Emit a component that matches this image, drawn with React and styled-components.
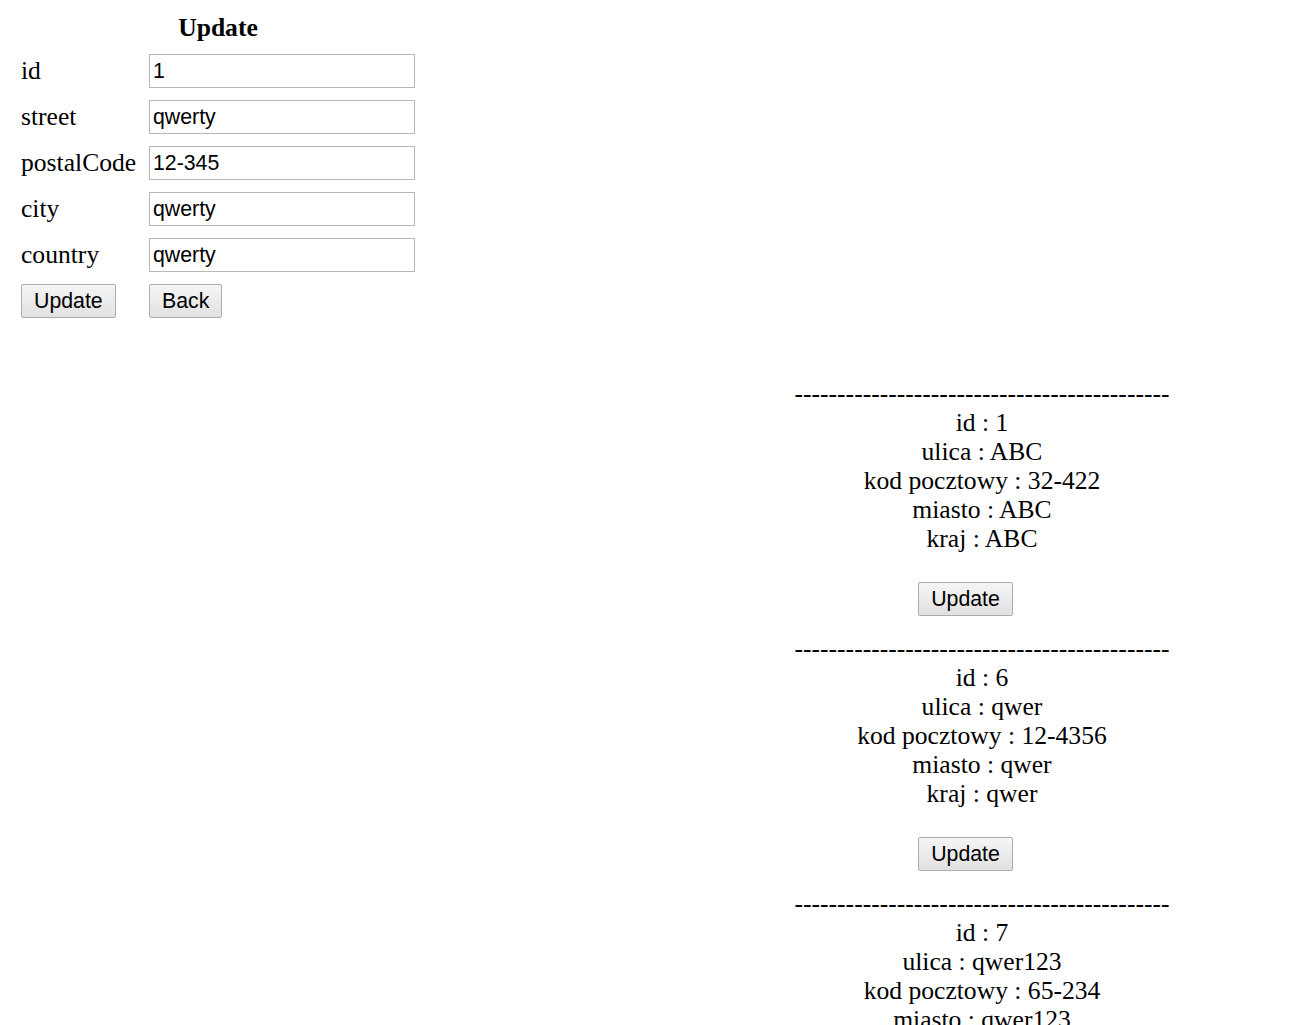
import React from "react";
import styled, { createGlobalStyle } from "styled-components";

const Global = createGlobalStyle`
  html, body {
    margin: 0;
    padding: 0;
    background: #ffffff;
    overflow: hidden;
  }
  body {
    font-family: "Liberation Serif", "Times New Roman", serif;
    color: #000;
  }
`;

const Page = styled.div`
  display: grid;
  grid-template-columns: 1fr 400px;
  grid-template-rows: auto auto;
  padding: 13px 118px 0 21px;
  height: 1025px;
  box-sizing: border-box;
  align-content: start;
`;

const Form = styled.form`
  grid-column: 1;
  grid-row: 1;
  display: grid;
  grid-template-columns: 128px 266px;
  grid-template-rows: 29px;
  grid-auto-rows: 34px;
  row-gap: 12px;
  align-items: center;
  justify-self: start;
  margin: 0;
`;

const Heading = styled.div`
  grid-column: 1 / span 2;
  text-align: center;
  font-weight: bold;
  font-size: 25.6px;
  line-height: 29px;
`;

const Label = styled.label`
  font-size: 25.6px;
  line-height: 29px;
  white-space: nowrap;
  margin-top: -2px;
`;

const Input = styled.input`
  box-sizing: border-box;
  width: 266px;
  height: 34px;
  margin: 0;
  padding: 0 3px;
  border: 1px solid #b8b8b8;
  background: #fff;
  font-family: "Liberation Sans", Arial, sans-serif;
  font-size: 21.3px;
  color: #000;
  outline: none;
`;

const Button = styled.button`
  box-sizing: border-box;
  height: 34px;
  margin: 0;
  padding: 0 12px;
  border: 1px solid #acacac;
  border-radius: 2px;
  background: linear-gradient(#f5f5f5, #e1e1e1);
  font-family: "Liberation Sans", Arial, sans-serif;
  font-size: 21.3px;
  color: #000;
  justify-self: start;
  cursor: pointer;
`;

const List = styled.div`
  grid-column: 2;
  grid-row: 2;
  margin-top: 61px;
  text-align: center;
  font-size: 25.6px;
  line-height: 29px;
`;

const Entry = styled.div`
  margin-bottom: 18px;
`;

const Line = styled.div`
  white-space: nowrap;
`;

const ButtonRow = styled.div`
  display: flex;
  justify-content: center;
  padding-top: 29px;
  padding-right: 33px;
`;

const fields = [
  ["id", "1"],
  ["street", "qwerty"],
  ["postalCode", "12-345"],
  ["city", "qwerty"],
  ["country", "qwerty"],
];

const addresses = [
  { id: 1, ulica: "ABC", kod: "32-422", miasto: "ABC", kraj: "ABC" },
  { id: 6, ulica: "qwer", kod: "12-4356", miasto: "qwer", kraj: "qwer" },
  { id: 7, ulica: "qwer123", kod: "65-234", miasto: "qwer123", kraj: "qwer123" },
];

const dashes = "-".repeat(44);

export default function App() {
  return (
    <>
      <Global />
      <Page>
        <Form onSubmit={(e) => e.preventDefault()}>
          <Heading>Update</Heading>
          {fields.map(([name, value]) => (
            <React.Fragment key={name}>
              <Label htmlFor={name}>{name}</Label>
              <Input id={name} defaultValue={value} />
            </React.Fragment>
          ))}
          <Button type="submit">Update</Button>
          <Button type="button">Back</Button>
        </Form>
        <List>
          {addresses.map((a) => (
            <Entry key={a.id}>
              <Line>{dashes}</Line>
              <Line>id : {a.id}</Line>
              <Line>ulica : {a.ulica}</Line>
              <Line>kod pocztowy : {a.kod}</Line>
              <Line>miasto : {a.miasto}</Line>
              <Line>kraj : {a.kraj}</Line>
              <ButtonRow>
                <Button type="button">Update</Button>
              </ButtonRow>
            </Entry>
          ))}
        </List>
      </Page>
    </>
  );
}
